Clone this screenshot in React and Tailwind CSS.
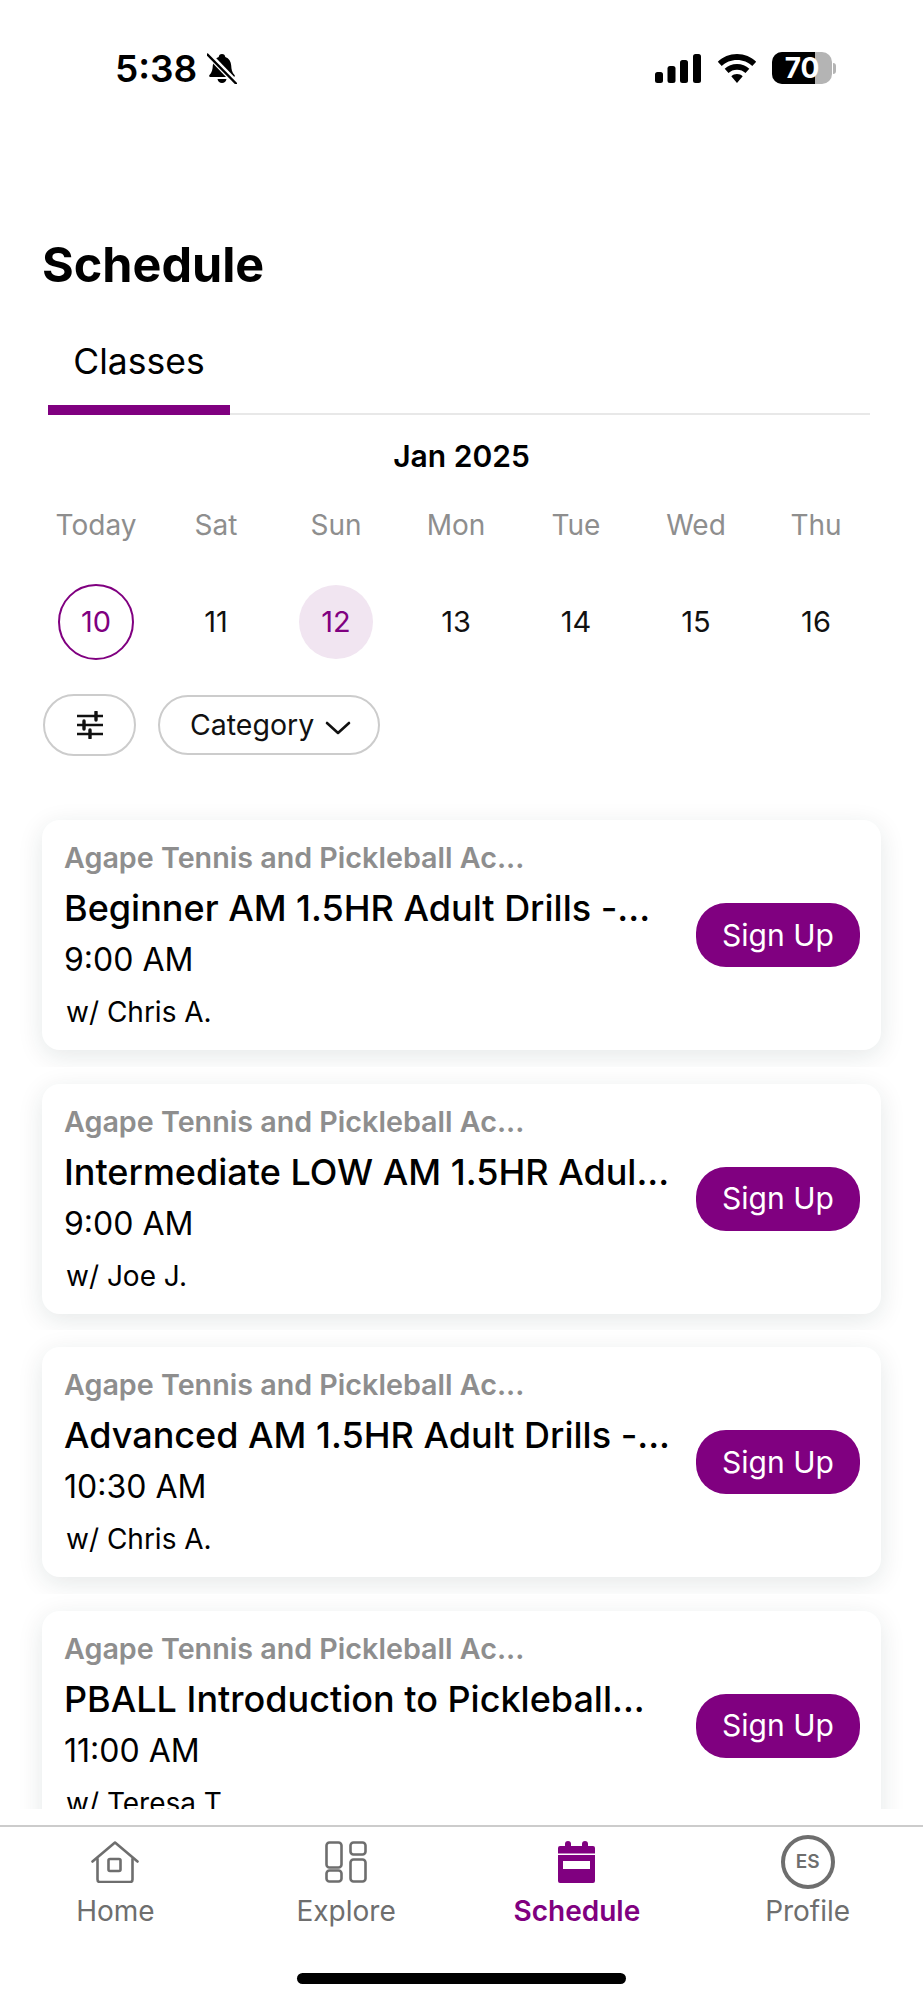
const INTER = "font-['Inter',sans-serif]";

const days = [
  ["Today", "10"], ["Sat", "11"], ["Sun", "12"], ["Mon", "13"], ["Tue", "14"], ["Wed", "15"], ["Thu", "16"],
];

const classes = [
  ["Beginner AM 1.5HR Adult Drills -...", "9:00 AM", "w/ Chris A."],
  ["Intermediate LOW AM 1.5HR Adul...", "9:00 AM", "w/ Joe J."],
  ["Advanced AM 1.5HR Adult Drills -...", "10:30 AM", "w/ Chris A."],
  ["PBALL Introduction to Pickleball...", "11:00 AM", "w/ Teresa T."],
];

function BellOff() {
  return (
    <svg width="30" height="31" viewBox="0 0 30 31" className="ml-[10px]">
      <path d="M15 1c2 0 3 1.200 3.300 3 3.700 1.300 5.700 4.500 5.900 8.500.2 4 .8 7 3.300 9.500.8.800.3 2-.8 2H3.300c-1.100 0-1.600-1.200-.8-2 2.500-2.500 3.100-5.500 3.300-9.500.2-4 2.200-7.200 5.900-8.500C12 2.200 13 1 15 1z" fill="#000" />
      <path d="M10.500 26h9c-.4 2.600-2.200 4-4.500 4s-4.100-1.400-4.500-4z" fill="#000" />
      <path d="M1 1l28 29" stroke="#fff" strokeWidth="6" />
      <path d="M0.500 1.500L29 30.500" stroke="#000" strokeWidth="2.400" strokeLinecap="round" />
    </svg>
  );
}

function StatusBar() {
  return (
    <div className="h-[232px] pt-[51px] pl-[115px] pr-[87px] flex items-start justify-between">
      <div className="flex items-center h-[34px]">
        <span className="text-[37px] leading-none font-semibold text-black">5:38</span>
        <BellOff />
      </div>
      <div className="flex items-center h-[34px]">
        <svg width="46" height="30" viewBox="0 0 46 30" className="mr-[16px]">
          <rect x="0" y="19" width="8" height="11" rx="2.500" />
          <rect x="12.500" y="13" width="8" height="17" rx="2.500" />
          <rect x="25" y="7" width="8" height="23" rx="2.500" />
          <rect x="38" y="1" width="8" height="29" rx="2.500" />
        </svg>
        <svg width="40" height="30" viewBox="0 0 40 30" className="mr-[15px]">
          <path d="M20 1C12.500 1 5.800 4 0.800 8.800l3.900 4.300C8.700 9.300 14 7 20 7s11.300 2.300 15.300 6.100l3.900-4.300C34.200 4 27.500 1 20 1z" />
          <path d="M20 11c-4.800 0-9.100 1.800-12.300 4.800l3.800 4.300c2.200-2.100 5.200-3.300 8.500-3.300s6.300 1.200 8.500 3.300l3.800-4.300C29.100 12.800 24.800 11 20 11z" />
          <path d="M20 21c-2.200 0-4.200.8-5.700 2.200L20 30l5.700-6.800C24.200 21.800 22.200 21 20 21z" />
        </svg>
        <div className="relative w-[60px] h-[32px] rounded-[10px] overflow-hidden bg-[#b4b4b4]">
          <div className="h-full w-[43px] bg-black" />
          <span className="absolute inset-0 flex items-center justify-center text-white font-bold text-[28px] leading-none">70</span>
        </div>
        <div className="w-[3px] h-[11px] ml-[1px] rounded-r-full bg-[#b4b4b4]" />
      </div>
    </div>
  );
}

function Calendar() {
  return (
    <div className="pl-[36px] pr-[47px]">
      <div className="grid grid-cols-7 mt-[17px] h-[60px] items-center text-center text-[28px] text-[#8e8e8e]">
        {days.map(([d]) => <span key={d}>{d}</span>)}
      </div>
      <div className="grid grid-cols-7 mt-[29px] h-[76px] items-center text-center text-[29px] text-[#111]">
        {days.map(([d, n]) => (
          <div key={n} className="flex justify-center">
            {n === "10" && <span className="w-[76px] h-[76px] rounded-full border-2 border-[#800080] text-[#800080] flex items-center justify-center">{n}</span>}
            {n === "12" && <span className="w-[74px] h-[74px] rounded-full bg-[#f1e5f1] text-[#800080] flex items-center justify-center">{n}</span>}
            {n !== "10" && n !== "12" && <span>{n}</span>}
          </div>
        ))}
      </div>
    </div>
  );
}

function Filters() {
  return (
    <div className="flex items-center pl-[43px] mt-[34px] h-[62px]">
      <button className="w-[93px] h-[62px] rounded-[31px] border-2 border-[#cccccc] flex items-center justify-center">
        <svg width="28" height="28" viewBox="0 0 28 28" stroke="#111" strokeWidth="2.600" fill="none">
          <path d="M1 5h26M1 14h26M1 23h26" />
          <path d="M20 1v8M8 10v8M14 19v8" strokeWidth="3.400" strokeLinecap="round" />
        </svg>
      </button>
      <button className="ml-[22px] w-[222px] h-[60px] rounded-[30px] border-2 border-[#cccccc] flex items-center pl-[30px]">
        <span className="text-[28.5px] text-[#111]">Category</span>
        <svg width="26" height="14" viewBox="0 0 26 14" className="ml-[11px] mt-[5px]" fill="none" stroke="#111" strokeWidth="2.600" strokeLinecap="round" strokeLinejoin="round">
          <path d="M2 2l11 10L24 2" />
        </svg>
      </button>
    </div>
  );
}

function ClassCard({ title, time, coach }) {
  return (
    <div className="h-[263.5px] px-[42px] pt-[17px] overflow-hidden shrink-0">
      <div className="h-[230px] rounded-[18px] bg-white shadow-[0_6px_26px_rgba(20,50,50,0.11)] flex items-center pl-[22px] pr-[21px]">
        <div className="flex-1 min-w-0 whitespace-nowrap self-start pt-[18px]">
          <div className="text-[28.7px] leading-[40px] font-semibold text-[#8e8e8e]">Agape Tennis and Pickleball Ac...</div>
          <div className="text-[36px] leading-[60px] font-medium text-black">{title}</div>
          <div className="text-[32px] leading-[44px] text-black">{time}</div>
          <div className="text-[28px] leading-[60px] text-black pl-[2px]">{coach}</div>
        </div>
        <button className="w-[164px] h-[64px] rounded-[30px] bg-[#800080] text-white text-[30px] shrink-0">Sign Up</button>
      </div>
    </div>
  );
}

function NavItem({ label, active, children }) {
  return (
    <div className="flex flex-col items-center">
      <div className="h-[54px] flex items-center justify-center">{children}</div>
      <span className={active ? "text-[28px] leading-[44px] font-semibold text-[#800080]" : "text-[28px] leading-[44px] text-[#6e6e6e]"}>{label}</span>
    </div>
  );
}

function BottomNav() {
  return (
    <div className="border-t-2 border-[#cccccc] bg-white shrink-0">
      <div className="grid grid-cols-4 pt-[8px]">
        <NavItem label="Home">
          <svg width="48" height="42" viewBox="0 0 48 42" fill="none" stroke="#6e6e6e" strokeWidth="2.600" strokeLinejoin="round" strokeLinecap="round">
            <path d="M1.500 20.500L24 1.500l22.500 19" />
            <path d="M6.500 18v20.500c0 1.500 1 2.500 2.500 2.500h30c1.500 0 2.500-1 2.500-2.500V18" />
            <rect x="17.500" y="18" width="12" height="12" rx="1.500" />
          </svg>
        </NavItem>
        <NavItem label="Explore">
          <svg width="42" height="42" viewBox="0 0 42 42" fill="none" stroke="#6e6e6e" strokeWidth="2.600">
            <rect x="1.500" y="1.500" width="15" height="25" rx="3" />
            <rect x="25.500" y="1.500" width="15" height="12" rx="3" />
            <rect x="1.500" y="29.500" width="15" height="11" rx="3" />
            <rect x="25.500" y="18.500" width="15" height="22" rx="3" />
          </svg>
        </NavItem>
        <NavItem label="Schedule" active>
          <svg width="37" height="42" viewBox="0 0 37 42" fill="#800080">
            <rect x="7" y="0" width="6" height="10" rx="3" />
            <rect x="24" y="0" width="6" height="10" rx="3" />
            <path fillRule="evenodd" d="M2 5h33a2 2 0 012 2v33a2 2 0 01-2 2H2a2 2 0 01-2-2V7a2 2 0 012-2zM0 12.500v1.500h37v-1.500zM5 20v8h27v-8z" />
          </svg>
        </NavItem>
        <NavItem label="Profile">
          <div className="w-[54px] h-[54px] rounded-full border-[4px] border-[#6e6e6e] flex items-center justify-center text-[19px] font-semibold text-[#6e6e6e]">ES</div>
        </NavItem>
      </div>
      <div className="h-[67px] pt-[40px] flex justify-center">
        <div className="w-[329px] h-[11px] rounded-full bg-black" />
      </div>
    </div>
  );
}

export default function App() {
  return (
    <div className={`${INTER} w-[923px] h-[2000px] bg-white flex flex-col overflow-hidden text-black`}>
      <StatusBar />
      <h1 className="h-[66px] pl-[42px] flex items-center text-[48.5px] font-bold leading-none">Schedule</h1>
      <div className="ml-[48px] mr-[53px] mt-[32px] h-[85px] border-b-2 border-[#e8e8e8] relative">
        <div className="w-[182px] h-[85px] text-center text-[35.5px] leading-[64px] border-b-[10px] border-[#800080] box-border">Classes</div>
      </div>
      <div className="h-[44px] mt-[19px] flex items-center justify-center text-[30px] font-semibold">Jan 2025</div>
      <Calendar />
      <Filters />
      <div className="mt-[47px] flex-1 min-h-0 overflow-hidden flex flex-col">
        {classes.map(([t, h, c]) => <ClassCard key={t} title={t} time={h} coach={c} />)}
      </div>
      <div className="h-[16px] shrink-0" />
      <BottomNav />
    </div>
  );
}
